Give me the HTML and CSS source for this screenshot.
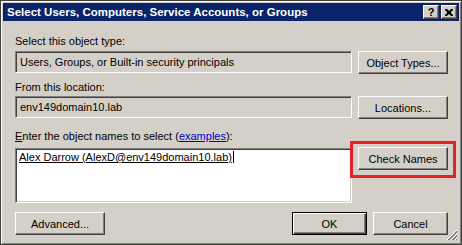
FILE: index.html
```html
<!DOCTYPE html>
<html>
    <head>
        <title>Select Users, Computers, Service Accounts, or Groups</title>
        <meta charset="UTF-8">
        <link rel="stylesheet" href="styles.css">
    </head>
    <body>
        <div class="window">
            <div class="titleBar">
                <span class="titleText">Select Users, Computers, Service Accounts, or Groups</span>
                <span class="capButton">?</span>
                <span class="capButton">
                    <svg width="8" height="7" viewBox="0 0 8 7"><path d="M0 0h2l2 2 2-2h2v1l-2 2v1l2 2v1h-2l-2-2-2 2h-2v-1l2-2v-1l-2-2z" fill="#000"/></svg>
                </span>
            </div>

            <div class="content">
                <div class="label label1">Select this object type:</div>
                <div class="row">
                    <div class="field">Users, Groups, or Built-in security principals</div>
                    <button class="btn">Object Types...</button>
                </div>

                <div class="label label2">From this location:</div>
                <div class="row">
                    <div class="field">env149domain10.lab</div>
                    <button class="btn">Locations...</button>
                </div>

                <div class="label label3"><u>E</u>nter the object names to select (<a href="#" class="link">examples</a>):</div>
                <div class="row rowNames">
                    <div class="names"><span class="resolved">Alex Darrow (AlexD@env149domain10.lab)</span><span class="caret"></span></div>
                    <div class="checkWrap">
                        <button class="btn">Check Names</button>
                        <div class="highlight"></div>
                    </div>
                </div>

                <div class="bottomRow">
                    <button class="btn">Advanced...</button>
                    <div class="okCancel">
                        <button class="btn btnDefault">OK</button>
                        <button class="btn btnCancel">Cancel</button>
                    </div>
                </div>
            </div>

            <svg class="grip" width="12" height="12" viewBox="0 0 12 12">
                <path d="M11 1L1 11M11 5L5 11M11 9L9 11" stroke="#fff" stroke-width="1"/>
                <path d="M11 2L2 11M11 3L3 11M11 6L6 11M11 7L7 11M11 10L10 11" stroke="#808080" stroke-width="1"/>
            </svg>
        </div>
    </body>
</html>
```

FILE: styles.css
```css
body {
    margin: 0;
    font-family: "Liberation Sans", Arial, sans-serif;
    font-size: 11px;
    color: #000;
}

.window {
    position: relative;
    width: 462px;
    height: 245px;
    box-sizing: border-box;
    background: #d4d0c8;
    border: 1px solid #404040;
    box-shadow: inset 1px 1px 0 #fff, inset -1px -1px 0 #808080;
    padding: 2px;
}

/* title bar */
.titleBar {
    display: flex;
    align-items: center;
    height: 18px;
    background: #0a246a;
    padding: 0 2px 0 4px;
}
.titleText {
    flex: 1;
    color: #fff;
    font-weight: bold;
    font-size: 11.5px;
    white-space: nowrap;
}
.capButton {
    width: 16px;
    height: 14px;
    box-sizing: border-box;
    display: flex;
    align-items: center;
    justify-content: center;
    background: #d4d0c8;
    border: 1px solid;
    border-color: #fff #404040 #404040 #fff;
    box-shadow: inset -1px -1px 0 #808080;
    font-weight: bold;
    font-size: 11px;
    line-height: 12px;
}
.capButton + .capButton {
    margin-left: 2px;
}

/* body of the dialog */
.content {
    padding: 13px 11px 0 12px;
}
.label {
    height: 14px;
    line-height: 14px;
    white-space: nowrap;
}
.label1 { margin-bottom: 3px; }
.label2 { margin: 6px 0 2px; }
.label3 { margin: 10px 0 4px; }

.link {
    color: #0000cc;
}

.row {
    display: flex;
    justify-content: space-between;
    align-items: flex-start;
    height: 23px;
}
.field {
    width: 337px;
    height: 22px;
    box-sizing: border-box;
    border: 1px solid;
    border-color: #808080 #fff #fff #808080;
    box-shadow: inset 1px 1px 0 #404040, inset -1px -1px 0 #d4d0c8;
    padding: 0 4px;
    line-height: 20px;
    white-space: nowrap;
    overflow: hidden;
}

.btn {
    width: 90px;
    height: 23px;
    box-sizing: border-box;
    margin: 0;
    padding: 0;
    background: #d4d0c8;
    border: 1px solid;
    border-color: #fff #404040 #404040 #fff;
    box-shadow: inset -1px -1px 0 #808080;
    font-family: "Liberation Sans", Arial, sans-serif;
    font-size: 11px;
    color: #000;
}

.rowNames {
    height: auto;
}
.names {
    width: 337px;
    height: 55px;
    margin-top: 1px;
    box-sizing: border-box;
    background: #fff;
    border: 1px solid;
    border-color: #808080 #fff #fff #808080;
    box-shadow: inset 1px 1px 0 #404040, inset -1px -1px 0 #d4d0c8;
    padding: 1px 3px;
    line-height: 14px;
    white-space: nowrap;
}
.resolved {
    text-decoration: underline;
}
.caret {
    display: inline-block;
    width: 1px;
    height: 12px;
    background: #000;
    vertical-align: -2px;
    margin-left: 1px;
}

.checkWrap {
    position: relative;
}
.highlight {
    position: absolute;
    top: -6px;
    left: -8px;
    right: -8px;
    bottom: -8px;
    border: 3px solid #e8202a;
}

.bottomRow {
    display: flex;
    justify-content: space-between;
    margin-top: 9px;
}
.okCancel {
    display: flex;
    gap: 6px;
}
.btnDefault {
    width: 75px;
    border: 1px solid #000;
    box-shadow: inset 1px 1px 0 #fff, inset -1px -1px 0 #404040, inset -2px -2px 0 #808080;
}
.btnCancel {
    width: 75px;
}

.grip {
    position: absolute;
    right: 3px;
    bottom: 3px;
}
```
